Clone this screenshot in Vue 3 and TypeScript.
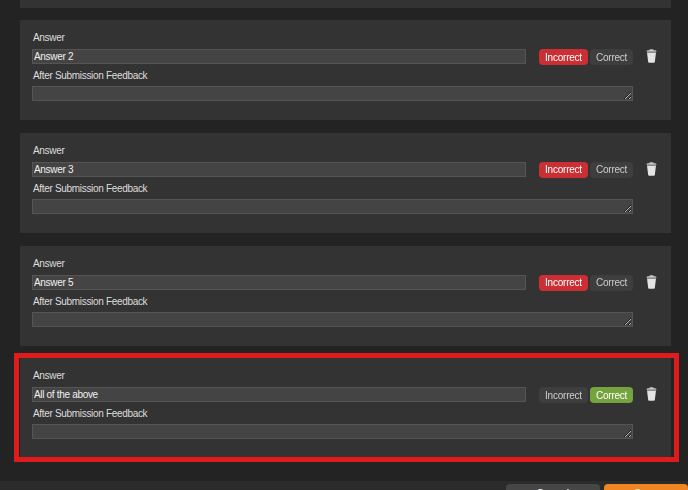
<script setup lang="ts">
interface AnswerRow { text: string; correct: boolean; highlighted?: boolean }
const answers: AnswerRow[] = [
  { text: 'Answer 2', correct: false },
  { text: 'Answer 3', correct: false },
  { text: 'Answer 5', correct: false },
  { text: 'All of the above', correct: true, highlighted: true },
]
</script>

<template>
  <div class="page">
    <div class="list">
      <div class="card stub"></div>
      <section v-for="a in answers" :key="a.text" class="card">
        <label class="lbl">Answer</label>
        <div class="row">
          <input class="txt" :value="a.text" />
          <div class="toggle">
            <button class="tbtn" :class="{ bad: !a.correct }">Incorrect</button>
            <button class="tbtn" :class="{ good: a.correct }">Correct</button>
          </div>
          <svg class="trash" viewBox="0 0 11 14" width="11" height="14">
            <path d="M1 3.6 L2.2 13 Q2.3 13.8 3.1 13.8 H7.9 Q8.7 13.8 8.8 13 L10 3.6 Z" fill="#e4e4e4" />
            <path d="M0.4 2.8 Q0.4 1.2 1.8 1.2 H3.4 L3.8 0.3 H7.2 L7.6 1.2 H9.2 Q10.6 1.2 10.6 2.8 Z" fill="#c8c8c8" />
          </svg>
        </div>
        <label class="lbl second">After Submission Feedback</label>
        <textarea class="area"></textarea>
        <div v-if="a.highlighted" class="mark"></div>
      </section>
    </div>
    <footer class="foot">
      <button class="fbtn plain">Cancel</button>
      <button class="fbtn orange">Save</button>
    </footer>
  </div>
</template>

<style scoped>
.page {
  width: 688px;
  height: 490px;
  overflow: hidden;
  background: #232323;
  font-family: "Liberation Sans", Arial, sans-serif;
  font-size: 10px;
  letter-spacing: -0.32px;
  color: #ddd;
  display: flex;
  flex-direction: column;
}
.list {
  flex: none;
  height: 481px;
  padding: 0 17px 0 20px;
  display: flex;
  flex-direction: column;
  gap: 12.8px;
  box-sizing: border-box;
}
.card {
  position: relative;
  flex: none;
  height: 100px;
  box-sizing: border-box;
  background: #333;
  padding: 12px 13px 0;
}
.stub { height: 8px; padding: 0; margin-bottom: -0.8px; }
.lbl { display: block; line-height: 12px; color: #ddd; }
.second { margin-top: 5px; }
.row { display: flex; align-items: flex-start; margin-top: 5px; height: 16px; }
.txt {
  width: 494px;
  height: 15px;
  margin-left: -1px;
  box-sizing: border-box;
  padding: 0 1px;
  background: #444;
  border: 1px solid #555;
  color: #f0f0f0;
  font: 10px "Liberation Sans", Arial, sans-serif;
  letter-spacing: -0.32px;
  outline: none;
}
.toggle { display: flex; gap: 2px; margin-left: 13px; }
.tbtn {
  height: 16px;
  padding: 0 6px;
  border: none;
  border-radius: 4px;
  background: #3e3e3e;
  color: #ccc;
  font: 10px "Liberation Sans", Arial, sans-serif;
  letter-spacing: -0.22px;
}
.bad { background: #cc2f33; color: #fff; }
.good { background: #75a33d; color: #fff; }
.trash { margin-left: 13px; }
.area {
  display: block;
  width: 601px;
  height: 15px;
  margin: 4px 0 0 -1px;
  box-sizing: border-box;
  background: #444;
  border: 1px solid #555;
  padding: 0;
  outline: none;
  resize: both;
}
.mark {
  position: absolute;
  left: -6px;
  right: -8px;
  top: -5.4px;
  bottom: -3.6px;
  border: 5px solid #e01b1b;
  pointer-events: none;
}
.foot {
  flex: 1;
  background: #2b2b2b;
  display: flex;
  justify-content: flex-end;
  gap: 4px;
  padding-top: 3px;
}
.fbtn {
  height: 19px;
  border: none;
  border-radius: 4px 4px 0 0;
  color: #eee;
  font: bold 10px/19px "Liberation Sans", Arial, sans-serif;
  padding: 0;
}
.plain { width: 94px; background: #464646; }
.orange { width: 84px; background: #f08522; }
</style>
